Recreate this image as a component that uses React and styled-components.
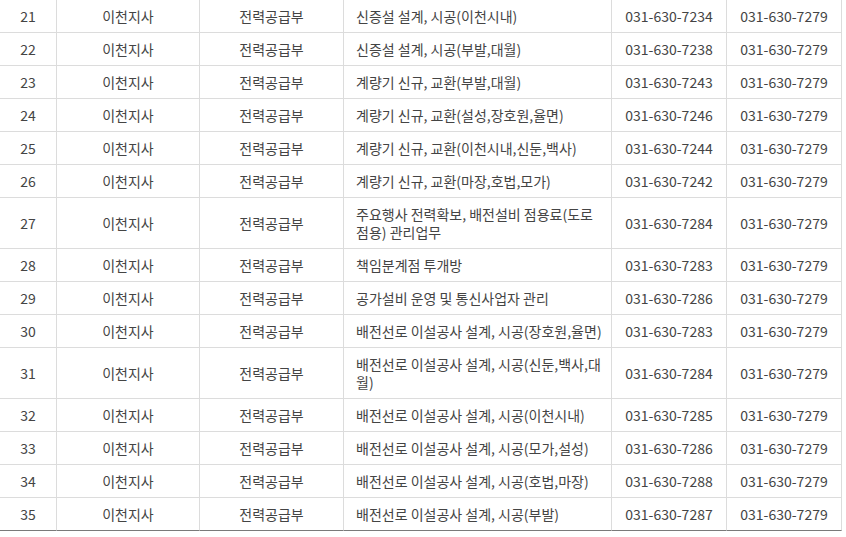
import React from "react";
import styled, { createGlobalStyle } from "styled-components";

const GlobalStyle = createGlobalStyle`
  html, body {
    margin: 0;
    padding: 0;
    background: #fff;
  }
  body {
    font-family: "Noto Sans CJK KR", "Noto Sans", sans-serif;
    color: #444;
  }
`;

const widths = [57, 143, 144, 268, 115, 115];

const rows = [
  [21, "신증설 설계, 시공(이천시내)", "031-630-7234"],
  [22, "신증설 설계, 시공(부발,대월)", "031-630-7238"],
  [23, "계량기 신규, 교환(부발,대월)", "031-630-7243"],
  [24, "계량기 신규, 교환(설성,장호원,율면)", "031-630-7246"],
  [25, "계량기 신규, 교환(이천시내,신둔,백사)", "031-630-7244"],
  [26, "계량기 신규, 교환(마장,호법,모가)", "031-630-7242"],
  [27, "주요행사 전력확보, 배전설비 점용료(도로 점용) 관리업무", "031-630-7284"],
  [28, "책임분계점 투개방", "031-630-7283"],
  [29, "공가설비 운영 및 통신사업자 관리", "031-630-7286"],
  [30, "배전선로 이설공사 설계, 시공(장호원,율면)", "031-630-7283"],
  [31, "배전선로 이설공사 설계, 시공(신둔,백사,대월)", "031-630-7284"],
  [32, "배전선로 이설공사 설계, 시공(이천시내)", "031-630-7285"],
  [33, "배전선로 이설공사 설계, 시공(모가,설성)", "031-630-7286"],
  [34, "배전선로 이설공사 설계, 시공(호법,마장)", "031-630-7288"],
  [35, "배전선로 이설공사 설계, 시공(부발)", "031-630-7287"],
];

const Table = styled.table`
  width: 842px;
  table-layout: fixed;
  border-collapse: separate;
  border-spacing: 0;
  font-size: 14px;
  line-height: 18px;
`;

const Col = styled.col`
  width: ${(p) => p.$w}px;
`;

const Cell = styled.td`
  box-sizing: border-box;
  padding: ${(p) => (p.$left ? "7px 6px 7px 12px" : "7px 4px")};
  text-align: ${(p) => (p.$left ? "left" : "center")};
  vertical-align: middle;
  border-right: 1px solid #dcdcdc;
  border-bottom: 1px solid #dcdcdc;
  color: #444;

  tr:last-child > & {
    border-bottom-color: #7a7a7a;
  }
`;

export default function App() {
  return (
    <>
      <GlobalStyle />
      <Table>
        <colgroup>
          {widths.map((w, i) => (
            <Col key={i} $w={w} />
          ))}
        </colgroup>
        <tbody>
          {rows.map(([no, task, tel]) => (
            <tr key={no}>
              <Cell>{no}</Cell>
              <Cell>이천지사</Cell>
              <Cell>전력공급부</Cell>
              <Cell $left>{task}</Cell>
              <Cell>{tel}</Cell>
              <Cell>031-630-7279</Cell>
            </tr>
          ))}
        </tbody>
      </Table>
    </>
  );
}
